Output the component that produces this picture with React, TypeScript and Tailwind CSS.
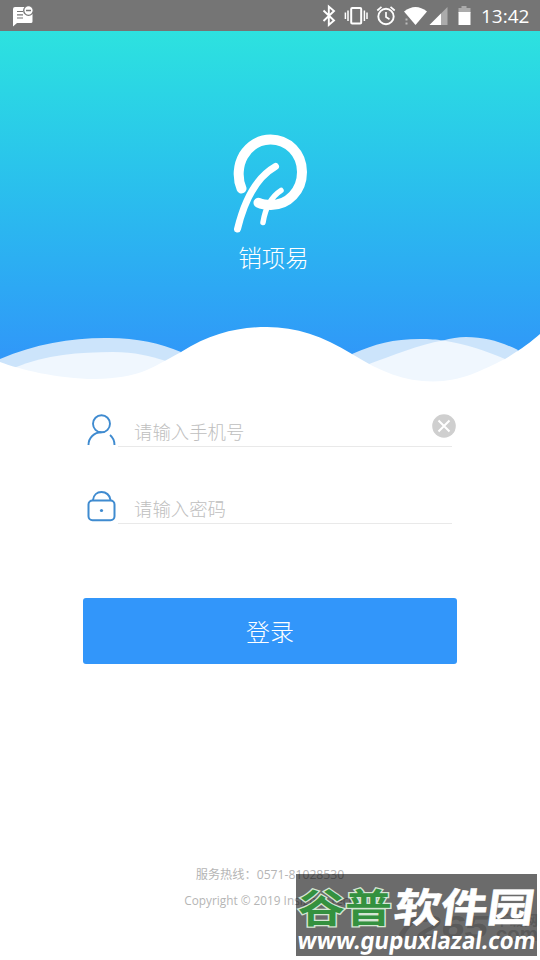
import type { ReactNode } from "react";

function StatusBar() {
  return (
    <div className="h-[31px] w-full bg-[#757575] flex items-center justify-between text-white">
      <svg className="ml-3 w-[22px] h-[22px]" viewBox="0 0 22 22" fill="none">
        <path
          d="M3 2h16v4h1.500v10.500a1.500 1.500 0 0 1-1.500 1.500H5l-4 3.500V4a2 2 0 0 1 2-2z"
          fill="white"
        />
        <path d="M5 6.500h6M5 9.800h6M5 13h6" stroke="#757575" strokeWidth="1.200" />
        <circle cx="16.500" cy="5.500" r="4.800" fill="white" stroke="#757575" strokeWidth="1.300" />
        <path d="M14 5.500h5" stroke="#757575" strokeWidth="1.500" />
      </svg>
      <div className="flex items-center">
        <svg className="w-[160px] h-[31px]" viewBox="320 0 160 31" fill="none">
          <path
            d="M323.500 10.500L334 20.500L328.800 25V6.500L334 11L323.500 21"
            stroke="white"
            strokeWidth="1.900"
          />
          <rect x="351.200" y="8" width="10" height="15.500" rx="1" stroke="white" strokeWidth="2" />
          <path
            d="M345.400 12.500v6.500M348 10.500v10.500M364.400 10.500v10.500M367 12.500v6.500"
            stroke="white"
            strokeWidth="1.500"
          />
          <circle cx="386" cy="16.500" r="7.700" stroke="white" strokeWidth="1.900" />
          <path
            d="M386 12v5l3.500 2.300M377.300 10.500l4.200-3.600M394.700 10.500l-4.200-3.600"
            stroke="white"
            strokeWidth="1.700"
          />
          <path d="M404 11.500q11.500-9 23 0L415.500 25z" fill="white" />
          <path d="M406.500 18.500v2M406.500 22.500v2" stroke="#bbb" strokeWidth="2" />
          <path d="M447.500 7v18h-18z" fill="#ababab" />
          <path d="M441 13.500V25h-11.500z" fill="white" />
          <path d="M458.500 8h3V6h5v2h4v5h-12z" fill="#ababab" />
          <path d="M458.500 12h12v13h-12z" fill="white" />
        </svg>
        <span className="w-[60px] font-['Open_Sans',sans-serif] text-[19px] leading-[31px] pl-px pt-px">
          13:42
        </span>
      </div>
    </div>
  );
}

function Logo() {
  return (
    <svg className="w-[90px] h-[110px]" viewBox="225 127 90 110" fill="none">
      <g stroke="white" strokeLinecap="round" strokeLinejoin="round">
        <path
          d="M241.500 188.500C237 178 238 165 243.500 155.500C250 145 260 139.500 270.500 139.500C288 139.500 302 153.500 302 172C302 191 288 205 271 205C266 205 262 204.500 258.500 202.800"
          strokeWidth="10"
        />
        <path d="M275.500 166.500C257 177 245 198 237.500 229" strokeWidth="7" />
        <path d="M281 190.500C271 197 265.500 207 263 222.500" strokeWidth="5.500" />
      </g>
    </svg>
  );
}

function Waves() {
  return (
    <svg className="block w-full h-[82px]" viewBox="0 310 540 82">
      <path d="M0 359C35 344 70 338 105 338C135 337.500 160 343 181 352L150 392H0z" fill="#cce4fb" />
      <path
        d="M352 354C375 344 393 339 420 339C430 339 436 339.500 443 340.500C451 338.500 458 337 466 337C486 337 501 342 518 350L500 392H370z"
        fill="#cce4fb"
      />
      <path d="M15 367.500C45 355 80 352 113 352C135 352 150 356 166 361L150 392H15z" fill="#f0f7fe" />
      <path
        d="M369 364C392 356 419 344.500 443 340.500C466 344 486 351 505 359L490 392H380z"
        fill="#f0f7fe"
      />
      <path
        d="M0 362C18 369 58 379 95 379C140 377.500 148 370 181 352C211 333 239 327 267 327C296 327 323 336 352 354C381 372 404 381.500 433 381.500C462 381.500 482 370 505 359C520 350 531 342 540 334V392H0z"
        fill="white"
      />
    </svg>
  );
}

function Field({ icon, placeholder, clearable }: {
  icon: ReactNode;
  placeholder: string;
  clearable?: boolean;
}) {
  return (
    <div className="flex h-[34px] items-start">
      <div className="w-[34px] shrink-0">{icon}</div>
      <div className="flex h-[34px] flex-1 items-center border-b border-[#e9e9e9] pl-4">
        <span className="flex-1 text-[18.400px] font-light leading-[26px] text-[#bebebe] pt-0.5">
          {placeholder}
        </span>
        {clearable && (
          <svg className="-mr-1 -mt-[7px] w-6 h-6" viewBox="0 0 24 24" fill="none">
            <circle cx="12" cy="12" r="11.800" fill="#cfcfcf" />
            <path d="M6.500 6.500l11 11M17.500 6.500l-11 11" stroke="white" strokeWidth="2" />
          </svg>
        )}
      </div>
    </div>
  );
}

function UserIcon() {
  return (
    <svg className="w-[34px] h-[34px]" viewBox="84 413 34 34" fill="none" stroke="#3f8bd0" strokeWidth="1.900">
      <circle cx="101.500" cy="423.800" r="8.500" />
      <path d="M101.500 432.300C94 432.300 88.500 438 88.500 445M110 435C113 437.500 114.500 441 114.500 445" />
    </svg>
  );
}

function LockIcon() {
  return (
    <svg className="w-[34px] h-[34px]" viewBox="84 490 34 34" fill="none" stroke="#3f8bd0" strokeWidth="2">
      <rect x="88.500" y="500.500" width="26" height="19.800" rx="4" />
      <path d="M93 500C93.500 495 97 492 101.500 492S110 495 110.500 500" />
      <circle cx="101.500" cy="510.500" r="1.600" fill="#3f8bd0" stroke="none" />
    </svg>
  );
}

function Watermark() {
  return (
    <svg
      className="absolute left-[296px] top-[874px] h-[86px] w-[244px]"
      viewBox="296 874 244 86"
    >
      <rect x="296" y="874" width="241" height="82" fill="black" fillOpacity="0.58" />
      <g fill="black" fillOpacity="0.18" fontWeight="700">
        <text
          x="394"
          y="938"
          textLength="94"
          lengthAdjust="spacingAndGlyphs"
          fontFamily="'Liberation Sans', sans-serif"
          fontStyle="italic"
          fontSize="32"
        >
          7265
        </text>
        <text
          x="495"
          y="925"
          textLength="43"
          lengthAdjust="spacingAndGlyphs"
          fontFamily="'Noto Sans CJK SC', sans-serif"
          fontSize="14"
        >
          下载网
        </text>
        <text
          x="490"
          y="941"
          textLength="48"
          lengthAdjust="spacingAndGlyphs"
          fontFamily="'Liberation Sans', sans-serif"
          fontSize="20"
        >
          .com
        </text>
      </g>
      <g fontFamily="'Noto Sans CJK SC', sans-serif" fontWeight="700">
        <text
          x="298"
          y="922"
          textLength="94"
          lengthAdjust="spacingAndGlyphs"
          fill="#34913f"
          stroke="#d5e5d4"
          strokeWidth="2.500"
          paintOrder="stroke"
          fontSize="39"
        >
          谷普
        </text>
        <text
          x="394"
          y="922"
          textLength="140"
          lengthAdjust="spacingAndGlyphs"
          fill="white"
          stroke="white"
          strokeWidth="0.600"
          fontSize="40"
          transform="translate(128 0) skewX(-8)"
        >
          软件园
        </text>
      </g>
      <text
        x="297"
        y="949"
        textLength="238"
        lengthAdjust="spacingAndGlyphs"
        fill="white"
        fontFamily="'Noto Sans', sans-serif"
        fontWeight="700"
        fontSize="24"
        transform="translate(133 0) skewX(-8)"
      >
        www.gupuxlazal.com
      </text>
    </svg>
  );
}

export default function App() {
  return (
    <div className="relative flex h-[960px] w-[540px] flex-col overflow-hidden bg-white font-['Noto_Sans_CJK_SC',sans-serif]">
      <StatusBar />
      <header className="flex h-[361px] flex-col items-center bg-linear-to-b from-[#2de2df] to-[#3194f9] to-[340px] pt-24">
        <Logo />
        <h1 className="mt-0.5 pl-[7px] text-[23.500px] font-light leading-[36px] text-white">销项易</h1>
        <div className="mt-auto w-full">
          <Waves />
        </div>
      </header>
      <main className="flex flex-col px-[83px] pt-[21px]">
        <div className="flex flex-col gap-[43px] pr-[5px] pl-px">
          <Field icon={<UserIcon />} placeholder="请输入手机号" clearable />
          <Field icon={<LockIcon />} placeholder="请输入密码" />
        </div>
        <button className="mt-[74px] h-[66px] rounded-[3px] bg-[#3296fa] text-[24px] font-light text-white">
          登录
        </button>
      </main>
      <footer className="mt-auto flex h-[98px] flex-col items-center text-[12.200px] leading-[24.500px] text-[#b5b5b5]">
        <p className="whitespace-nowrap">
          服务热线：<span className="font-['Open_Sans',sans-serif]">0571-81028530</span>
        </p>
        <p className="whitespace-nowrap font-['Open_Sans',sans-serif] text-[11.800px]">
          Copyright © 2019 Insigma Tech
        </p>
      </footer>
      <Watermark />
    </div>
  );
}
